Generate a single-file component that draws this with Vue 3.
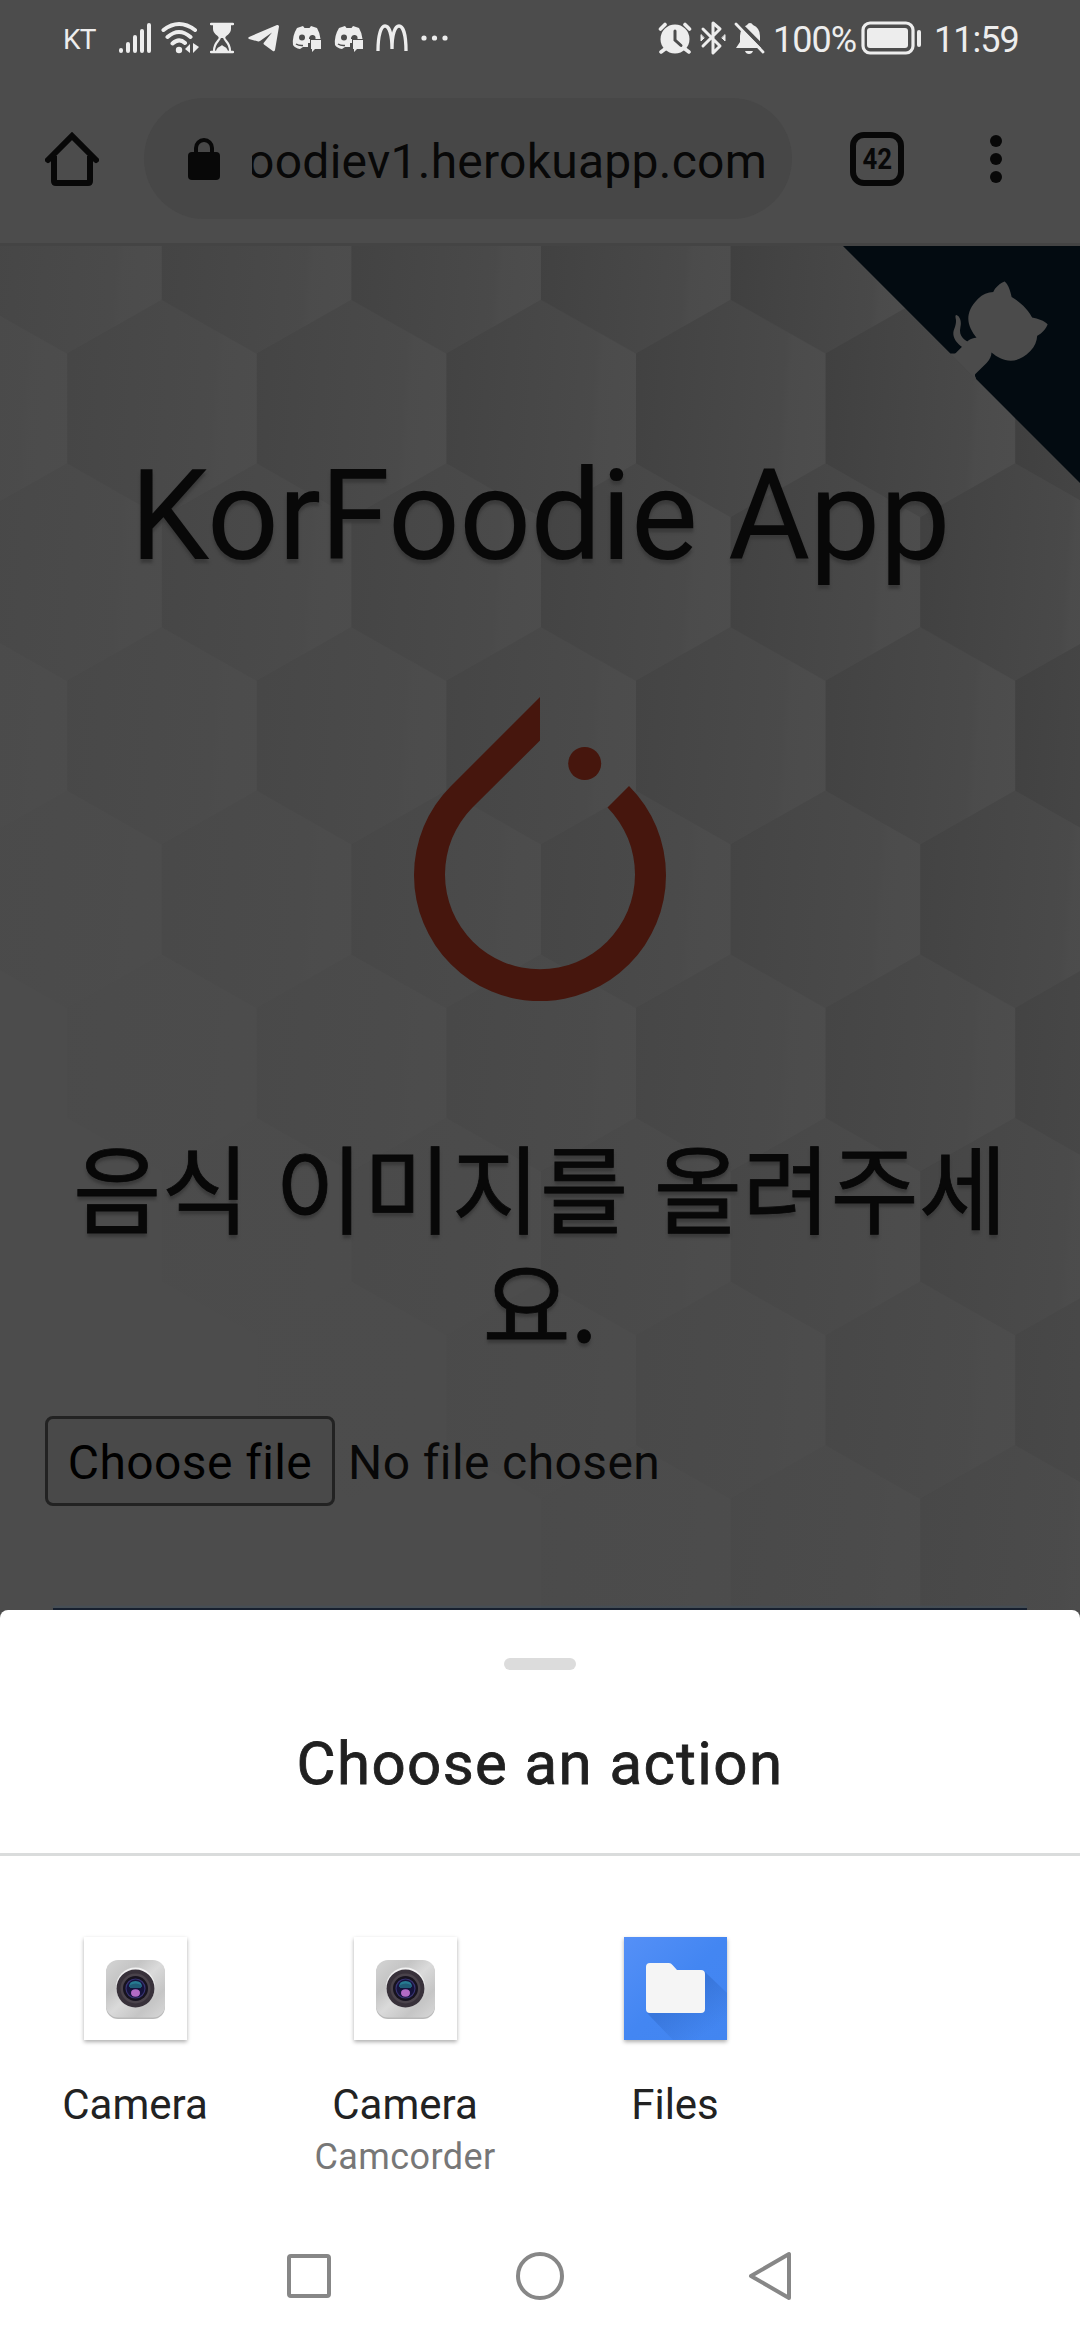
<script setup>
const W = 189.6
const hexes = []
for (let row = 0; row < 9; row++) {
  const top = 136 - 246 + row * 163.6
  const first = row % 2 ? 162 - W : 67 - W
  for (let col = 0; col < 8; col++) {
    const cx = first + col * W
    const fade = 0.36 + (cx / 1080) * 0.55 - (top / 1150) * 0.58
    hexes.push({
      id: `${row}-${col}`,
      points: [
        [cx, top], [cx + W / 2, top + 54], [cx + W / 2, top + 164],
        [cx, top + 218], [cx - W / 2, top + 164], [cx - W / 2, top + 54],
      ].map((p) => p.join(',')).join(' '),
      opacity: Math.max(0, Math.min(0.85, fade)),
    })
  }
}

const actions = [
  { id: 'camera', label: 'Camera', note: '', icon: 'camera' },
  { id: 'camcorder', label: 'Camera', note: 'Camcorder', icon: 'camera' },
  { id: 'files', label: 'Files', note: '', icon: 'files' },
]
</script>

<template>
  <div class="screen">
    <header class="status">
      <span class="carrier">KT</span>
      <svg class="signal" width="34" height="34" viewBox="0 0 34 34" stroke="#ededed" stroke-width="4" stroke-linecap="round">
        <path d="M3 29v1M10 23v7M17 16v14M24 10v20M31 4v26" />
      </svg>
      <svg class="wifi" width="38" height="34" viewBox="0 0 38 34" fill="none" stroke="#ededed" stroke-width="4" stroke-linecap="round">
        <path d="M2.500 9Q18 -3 34 9M6.500 16Q18 6 29.500 16M11.500 22.500Q18 16.500 24 22" />
        <circle cx="18" cy="29" r="3.200" fill="#ededed" stroke="none" />
        <path d="M29 23v9l-5-4zM32 22v10l6-6z" fill="#ededed" stroke="none" />
      </svg>
      <svg class="glass" width="24" height="32" viewBox="0 0 24 32">
        <path d="M1 2h22M1 30h22" stroke="#ededed" stroke-width="2.500" stroke-linecap="round" />
        <path d="M3 2h18v5c0 5-6 7-6 9h-6c0-2-6-4-6-9z" fill="#ededed" />
        <path d="M10 15c0 4-6 5-6 14M14 15c0 4 6 5 6 14" stroke="#ededed" stroke-width="2.200" fill="none" />
        <path d="M6 29c1-4 4-4 6-6 2 2 5 2 6 6z" fill="#ededed" />
      </svg>
      <svg class="plane" width="32" height="28" viewBox="0 0 32 28" fill="#ededed">
        <path d="M1 13 29 1q2-.5 2 1.500L27 26q-.7 2-2.500.7L16 20.500q-1-1 0-2l8-10-12 8.500q-1 .8-2.500.3L1 15q-1.500-1 0-2z" />
      </svg>
      <svg v-for="n in 2" :key="n" class="chat" width="30" height="27" viewBox="0 0 30 27">
        <path d="M5 3 11 1l1.500 2h5L19 1l6 2q3 5 3.500 11H18v4h-2v4h-5l-3 2Q3 23 1 20 0 11 5 3z" fill="#ededed" />
        <path d="M4 19q3 2 7 1.500" fill="none" stroke="#4c4c4c" stroke-width="1.500" />
        <circle cx="10" cy="12.500" r="3" fill="#4c4c4c" />
        <path d="M17 13q1-3.500 4-3t2.500 4H17z" fill="#4c4c4c" />
        <path d="M19 15h10v9h-6l-3 3v-3h-1z" fill="#ededed" />
      </svg>
      <svg class="arches" width="32" height="28" viewBox="0 0 32 28" fill="none" stroke="#ededed" stroke-width="3.300">
        <path d="M2 27C2 11 5 2 9 2s7 8 7 23C16 10 19 2 23 2s7 9 7 25" />
      </svg>
      <svg class="more" width="28" height="6" viewBox="0 0 28 6" fill="#ededed">
        <circle cx="3" cy="3" r="2.600" /><circle cx="13.500" cy="3" r="2.600" /><circle cx="24" cy="3" r="2.600" />
      </svg>
      <svg class="alarm" width="34" height="33" viewBox="0 0 34 33">
        <circle cx="17" cy="17" r="14.500" fill="#ededed" />
        <path d="M2.500 7 7 2.500M31.500 7 27 2.500M7 27l-4 3M27 27l4 3" stroke="#ededed" stroke-width="3.600" stroke-linecap="round" />
        <path d="M17 9v9l6 5.500" fill="none" stroke="#4c4c4c" stroke-width="3" stroke-linecap="round" />
      </svg>
      <svg class="bt" width="26" height="36" viewBox="0 0 26 36" fill="none" stroke="#ededed" stroke-width="3" stroke-linejoin="round" stroke-linecap="round">
        <path d="M3 9 20 26l-7 7V3l7 6L3 26" />
        <path d="M1 15v6l3-3zM25 15v6l-3-3z" fill="#ededed" stroke-width="1" />
      </svg>
      <svg class="bell" width="32" height="34" viewBox="0 0 32 34">
        <path d="M16 2q2 0 3 2 7 3 7 11v6l4 6H2l4-6v-6Q6 7 13 4q1-2 3-2zM11 30h8q-1 3-4 3t-4-3z" fill="#ededed" />
        <path d="M4 1 32 29" stroke="#4c4c4c" stroke-width="4" />
        <path d="M2 3 29 31" stroke="#ededed" stroke-width="2.800" stroke-linecap="round" />
      </svg>
      <span class="percent">100%</span>
      <svg class="battery" width="62" height="34" viewBox="0 0 62 34">
        <rect x="2" y="2" width="50" height="30" rx="7" fill="none" stroke="#ededed" stroke-width="3.200" />
        <rect x="6" y="7" width="41" height="20" rx="3" fill="#ededed" />
        <rect x="56" y="9" width="4" height="17" rx="2" fill="#ededed" />
      </svg>
      <span class="clock">11:59</span>
    </header>

    <nav class="toolbar">
      <svg class="home" width="54" height="56" viewBox="0 0 54 56" fill="none" stroke="#080808" stroke-width="6">
        <path d="M3 29 27 5l24 24" stroke-linecap="round" />
        <path d="M9 25v25q0 2 2 2h32q2 0 2-2V25" />
      </svg>
      <div class="omnibox">
        <svg width="32" height="42" viewBox="0 0 32 42">
          <rect y="14" width="32" height="28" rx="4" fill="#080808" />
          <path d="M8 16v-6a8 8 0 0 1 16 0v6" fill="none" stroke="#080808" stroke-width="4" />
        </svg>
        <div class="url"><span>oodiev1.herokuapp.com</span></div>
      </div>
      <div class="tabs"><span>42</span></div>
      <svg class="kebab" width="12" height="50" viewBox="0 0 12 50" fill="#080808">
        <circle cx="6" cy="7" r="6" /><circle cx="6" cy="25" r="6" /><circle cx="6" cy="43" r="6" />
      </svg>
    </nav>

    <main class="page">
      <svg class="pattern" width="1080" height="1364" viewBox="0 0 1080 1364">
        <defs>
          <linearGradient id="facet" x1="0" y1="0" x2="1" y2="0.08">
            <stop offset="0" stop-color="#3d3d3d" />
            <stop offset="0.35" stop-color="#424242" />
            <stop offset="0.8" stop-color="#484848" />
            <stop offset="0.84" stop-color="#4b4b4b" />
            <stop offset="1" stop-color="#4d4d4d" />
          </linearGradient>
        </defs>
        <polygon v-for="h in hexes" :key="h.id" :points="h.points" :opacity="h.opacity" fill="url(#facet)" />
      </svg>
      <svg class="corner" width="240" height="240" viewBox="0 0 250 250">
        <path d="M0,0 L115,115 L130,115 L142,142 L250,250 L250,0 Z" fill="#030b11" />
        <g fill="#4b4b4b">
          <path d="M128.300,109 C113.800,99.700 119,89.600 119,89.600 C122,82.700 120.500,78.600 120.500,78.600 C119.200,72 123.400,76.300 123.400,76.300 C127.300,80.900 125.500,87.300 125.500,87.300 C122.900,97.600 130.600,101.900 134.400,103.200" />
          <path d="M115,115 C114.900,115.100 118.700,116.500 119.800,115.400 L133.700,101.600 C136.900,99.200 139.900,98.400 142.200,98.600 C133.800,88 127.500,74.400 143.800,58 C148.500,53.400 154,51.200 159.700,51 C160.300,49.400 163.200,43.600 171.400,40.100 C171.400,40.100 176.100,42.500 178.800,56.200 C183.100,58.600 187.200,61.800 190.900,65.400 C194.500,69 197.700,73.200 200.100,77.600 C213.800,80.200 216.300,84.900 216.300,84.900 C212.700,93.100 206.900,96 205.400,96.600 C205.100,102.400 203,107.800 198.300,112.500 C181.900,128.900 168.300,122.500 157.700,114.100 C157.900,116.900 156.700,120.900 152.700,124.900 L141,136.500 C139.800,137.700 141.600,141.900 141.800,141.800 Z" />
        </g>
      </svg>
      <h1>KorFoodie App</h1>
      <svg class="flame" width="252" height="304" viewBox="0 0 252 304" fill="#46160d">
        <path d="M126 0 37 89A126 126 0 1 0 215 89L193.500 110.500A95 95 0 1 1 58.500 110.500L126 43.500Z" />
        <circle cx="170.700" cy="66.500" r="16.500" />
      </svg>
      <h2>음식 이미지를 올려주세<br />요.</h2>
      <div class="upload">
        <button type="button">Choose file</button>
        <span>No file chosen</span>
      </div>
      <div class="submit"></div>
    </main>

    <section class="sheet">
      <div class="handle"></div>
      <h3>Choose an action</h3>
      <ul class="actions">
        <li v-for="a in actions" :key="a.id">
          <div class="tile" :class="a.icon">
            <svg v-if="a.icon === 'camera'" width="103" height="103" viewBox="0 0 103 103">
              <defs>
                <linearGradient id="metal" x1="0" y1="0" x2="1" y2="1">
                  <stop offset="0" stop-color="#d4d4d4" /><stop offset="0.300" stop-color="#c4c4c4" />
                  <stop offset="0.500" stop-color="#dadada" /><stop offset="0.750" stop-color="#c5c5c5" />
                  <stop offset="1" stop-color="#d8d8d8" />
                </linearGradient>
              </defs>
              <rect x="22" y="24" width="59" height="58" rx="12" fill="#b9b9b9" />
              <rect x="22" y="23" width="59" height="57.500" rx="12" fill="url(#metal)" />
              <circle cx="51.500" cy="50" r="19.500" fill="#f1f1f1" />
              <circle cx="51.500" cy="51.500" r="19" fill="#38313a" />
              <circle cx="51.500" cy="51.500" r="15" fill="#4a434b" />
              <circle cx="51.500" cy="51.500" r="12.500" fill="#17131f" />
              <circle cx="51.500" cy="51.500" r="9.500" fill="#15133c" stroke="#373372" stroke-width="1.200" />
              <path d="M45 50q0-6 6.500-6t6.500 6q-6.500-4-13 0z" fill="#277b91" />
              <path d="M46 48q6-3 11 0v3H46z" fill="#205c77" />
              <ellipse cx="51.500" cy="56" rx="4.500" ry="3.700" fill="#b36bc6" />
            </svg>
            <svg v-else width="103" height="103" viewBox="0 0 103 103">
              <defs>
                <linearGradient id="blue" x1="0" y1="0" x2="1" y2="1">
                  <stop offset="0" stop-color="#5590f7" /><stop offset="0.500" stop-color="#4386f2" />
                  <stop offset="1" stop-color="#4285f0" />
                </linearGradient>
                <linearGradient id="cast" gradientUnits="userSpaceOnUse" x1="40" y1="50" x2="75" y2="102">
                  <stop offset="0.300" stop-color="#2f68c6" /><stop offset="1" stop-color="#2f68c6" stop-opacity="0" />
                </linearGradient>
              </defs>
              <rect width="103" height="103" fill="url(#blue)" />
              <path d="M23 76 49 103H103V56L80 34z" fill="url(#cast)" opacity="0.500" />
              <path d="M26 26h19q2 0 3.500 2l4.500 5h24q4 0 4 4v35q0 4-4 4H26q-4 0-4-4V30q0-4 4-4z" fill="#f5f5f5" />
            </svg>
          </div>
          <span class="label">{{ a.label }}</span>
          <span v-if="a.note" class="note">{{ a.note }}</span>
        </li>
      </ul>
      <footer class="keys">
        <svg width="50" height="50" viewBox="0 0 50 50"><rect x="5" y="5" width="40" height="40" rx="2" /></svg>
        <svg width="50" height="50" viewBox="0 0 50 50"><circle cx="25" cy="25" r="22" /></svg>
        <svg width="50" height="50" viewBox="0 0 50 50"><path d="M43 3v44L5 25z" stroke-linejoin="round" /></svg>
      </footer>
    </section>
  </div>
</template>

<style>
body { margin: 0; background: #4c4c4c; }
</style>

<style scoped>
.screen {
  width: 1080px;
  height: 2340px;
  display: flex;
  flex-direction: column;
  overflow: hidden;
  background: #4c4c4c;
  color: #080808;
  font-family: Roboto, "Noto Sans CJK KR", sans-serif;
}
.screen svg { flex: none; display: block; }
.status {
  height: 76px;
  box-sizing: border-box;
  display: flex;
  align-items: center;
  color: #ededed;
  white-space: nowrap;
  flex: none;
}
.carrier { margin-left: 63px; width: 55px; padding-top: 2px; font-size: 28px; font-weight: 400; letter-spacing: -0.8px; }
.wifi { margin-left: 9px; }
.glass { margin-left: 11px; }
.plane { margin-left: 14px; }
.chat { margin-left: 12px; }
.arches { margin-left: 12px; }
.more { margin-left: 13px; }
.alarm { margin-left: auto; }
.bt { margin-left: 8px; }
.bell { margin-left: 8px; }
.percent { margin-left: 7px; width: 88px; padding-top: 3px; font-size: 36px; letter-spacing: -1px; }
.clock { margin-left: 11px; width: 146px; padding-top: 3px; font-size: 36px; letter-spacing: -1px; }
.toolbar {
  height: 170px;
  box-sizing: border-box;
  padding: 0 78px 2px 45px;
  display: flex;
  align-items: center;
  border-bottom: 3px solid #444;
  flex: none;
}
.omnibox {
  width: 648px;
  height: 121px;
  margin-left: 45px;
  padding: 0 25px 0 44px;
  box-sizing: border-box;
  border-radius: 61px;
  background: #474747;
  display: flex;
  align-items: center;
}
.url {
  flex: 1;
  margin-left: 32px;
  overflow: hidden;
  display: flex;
  justify-content: flex-end;
  font-size: 48px;
  line-height: 64px;
  padding-top: 7px;
  letter-spacing: 0.25px;
}
.tabs {
  width: 54px;
  height: 54px;
  box-sizing: border-box;
  margin-left: 58px;
  border: 6px solid #080808;
  border-radius: 14px;
  display: flex;
  align-items: center;
  justify-content: center;
  font-size: 30px;
  font-weight: 700;
}
.tabs span { transform: scaleX(0.86); }
.kebab { margin-left: auto; }
.page {
  height: 1364px;
  position: relative;
  overflow: hidden;
  display: flex;
  flex-direction: column;
  align-items: center;
  flex: none;
  isolation: isolate;
}
.pattern { position: absolute; inset: 0; z-index: -1; }
.corner { position: absolute; top: -3px; right: 0; }
h1 {
  margin: 195px 0 0;
  font-size: 126px;
  line-height: 150px;
  font-weight: 400;
  letter-spacing: -0.6px;
  text-shadow: 0 4px 3px #3a3a3a;
  white-space: nowrap;
}
.flame { margin-top: 106px; }
h2 {
  margin: 126px 0 0;
  font-family: "Noto Sans CJK KR", sans-serif;
  font-size: 96px;
  line-height: 116px;
  font-weight: 400;
  -webkit-text-stroke: 0.8px #080808;
  word-spacing: 4px;
  text-align: center;
  white-space: nowrap;
  text-shadow: 0 4px 3px #3a3a3a;
}
.upload {
  margin-top: 57px;
  width: 990px;
  display: flex;
  align-items: center;
  gap: 13px;
  font-size: 48px;
  letter-spacing: 0.4px;
}
.upload span { padding-top: 2px; }
.upload button {
  width: 290px;
  height: 90px;
  padding: 2px 0 0;
  border: 3px solid #222;
  border-radius: 8px;
  background: #494949;
  color: #000;
  font: inherit;
  letter-spacing: 0.4px;
}
.submit {
  margin-top: auto;
  width: 974px;
  height: 2px;
  background: #17202f;
  box-shadow: 0 -2px 2px #444f5a;
  flex: none;
}
.sheet {
  flex: 1;
  display: flex;
  flex-direction: column;
  align-items: center;
  border-radius: 8px 8px 0 0;
  background: #fff;
}
.handle { width: 72px; height: 12px; margin-top: 48px; border-radius: 6px; background: #dcdcdc; }
h3 {
  width: 100%;
  height: 186px;
  box-sizing: border-box;
  margin: 0;
  padding-top: 58px;
  border-bottom: 3px solid #dadcdc;
  color: #202020;
  font-size: 60px;
  line-height: 72px;
  font-weight: 400;
  -webkit-text-stroke: 0.8px #202020;
  letter-spacing: 1.4px;
  text-align: center;
}
.actions {
  width: 100%;
  height: 340px;
  margin: 0;
  padding: 81px 0 0;
  list-style: none;
  display: flex;
  box-sizing: border-box;
}
.actions li { width: 270px; display: flex; flex-direction: column; align-items: center; }
.tile { width: 103px; height: 103px; box-shadow: 0 2px 4px rgba(0, 0, 0, 0.32); background: #fff; }
.label { margin-top: 40px; color: #222; font-size: 42px; line-height: 50px; }
.note { margin-top: 5px; color: #777; font-size: 36px; line-height: 44px; letter-spacing: 0.4px; }
.keys { display: flex; justify-content: center; gap: 181px; margin-top: 55px; }
.keys svg { fill: none; stroke: #878787; stroke-width: 4; }
</style>
